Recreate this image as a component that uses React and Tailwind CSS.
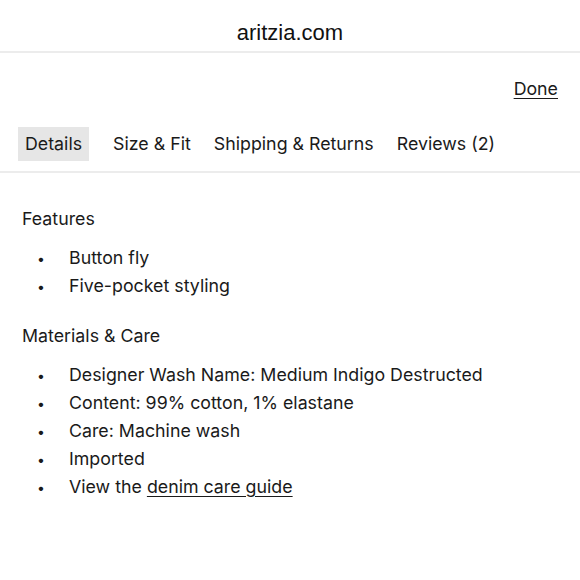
import React from "react";

const tabs = ["Details", "Size & Fit", "Shipping & Returns", "Reviews (2)"];

const features = ["Button fly", "Five-pocket styling"];

const materials = [
  "Designer Wash Name: Medium Indigo Destructed",
  "Content: 99% cotton, 1% elastane",
  "Care: Machine wash",
  "Imported",
];

const Bullet = ({ children }) => (
  <li className="flex items-center h-[28px]">
    <span className="w-[47px] pl-[15px] text-[14px]">•</span>
    <span>{children}</span>
  </li>
);

export default function App() {
  return (
    <div className="w-[580px] h-[580px] bg-white text-[#1a1a1a] overflow-hidden">
      <div
        className="h-[53px] flex items-center justify-center border-b-2 border-[#ececec] text-[22px] text-[#111]"
        style={{ fontFamily: "'Liberation Sans', Arial, sans-serif" }}
      >
        <span className="pt-[14px]">aritzia.com</span>
      </div>
      <div style={{ fontFamily: "Inter, 'Noto Sans', sans-serif" }} className="text-[17.8px]">
        <div className="flex justify-end pr-[22px] pt-[23px] h-[72px]">
          <button type="button" className="underline underline-offset-[3px] h-[24px]">
            Done
          </button>
        </div>
        <div className="flex items-center gap-[9px] px-[18px] h-[48px] border-b-2 border-[#ececec]">
          {tabs.map((t, i) => (
            <button
              key={t}
              type="button"
              className={`h-[34px] px-[7px] -mt-[8px] ${i === 0 ? "bg-[#e6e6e6]" : ""} ${i === 1 ? "ml-[8px]" : ""}`}
            >
              {t}
            </button>
          ))}
        </div>
        <div className="px-[22px] pt-[34px]">
          <h3 className="h-[24px] leading-[24px]">Features</h3>
          <ul className="mt-[13px]">
            {features.map((f) => (
              <Bullet key={f}>{f}</Bullet>
            ))}
          </ul>
          <h3 className="h-[24px] leading-[24px] mt-[24px]">Materials &amp; Care</h3>
          <ul className="mt-[13px]">
            {materials.map((m) => (
              <Bullet key={m}>{m}</Bullet>
            ))}
            <Bullet>
              View the{" "}
              <a href="#" className="underline underline-offset-[3px]">
                denim care guide
              </a>
            </Bullet>
          </ul>
        </div>
      </div>
    </div>
  );
}
